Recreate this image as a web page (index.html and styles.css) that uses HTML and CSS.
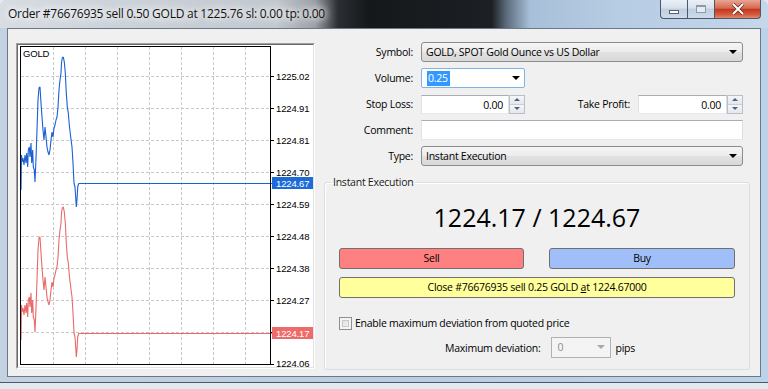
FILE: index.html
```html
<html>
<head>
    <link rel="stylesheet" href="styles.css">
</head>
<body>
<div class="window">
    <div class="titlebar">
        <span class="title">Order #76676935 sell 0.50 GOLD at 1225.76 sl: 0.00 tp: 0.00</span>
        <div class="caption">
            <span class="cap-btn cap-min"><i></i></span>
            <span class="cap-btn cap-max"><i></i></span>
            <span class="cap-btn cap-close">
                <svg width="14" height="12" viewBox="0 0 14 12"><path d="M2 1 L12 11 M12 1 L2 11" stroke="#5a2a20" stroke-width="3.4"/><path d="M2 1 L12 11 M12 1 L2 11" stroke="#fff" stroke-width="2"/></svg>
            </span>
        </div>
    </div>

    <div class="client">
        <!-- tick chart -->
        <div class="chart-panel">
            <div class="chart-inner">
                <svg width="295" height="322" viewBox="18 45 295 322">
                    <defs>
                        <polyline id="ticks" fill="none" stroke-width="1.1" stroke-linejoin="bevel"
                            points="21,190 21.5,155 22,162 23,158 24,165 25,155 26,163 26.7,153 27.7,167 28.3,150 29.3,147 30,157 31,143 31.7,163 32.7,150 33.3,167 34.3,170 35,182 36,158 37,130 38,100 39,88 40,87 41,103 42,117 43,130 44,140 45,127 46,137 47,147 48,152 49,155 50,150 51,140 52,132 53,137 54,128 55,125 56,120 57,117 58,107 59,90 60,80 61,73 61.5,63 62.3,58 63.3,57 64.3,62 65.3,73 66.3,93 67.3,107 68.3,113 69.3,125 70.7,137 72,147 73,163 74,183 75,187 75.7,197 76.3,207 77,200 77.7,187 78.7,183.5"/>
                    </defs>
                    <rect x="18" y="45" width="295" height="322" fill="#fff"/>
                    <g stroke="#c8c8c8" stroke-width="1" stroke-dasharray="3,2" fill="none">
                        <path d="M53.5 47V364 M85.5 47V364 M117.5 47V364 M149.5 47V364 M181.5 47V364 M213.5 47V364 M245.5 47V364"/>
                        <path d="M21 76.5H270 M21 108.5H270 M21 140.5H270 M21 172.5H270 M21 204.5H270 M21 236.5H270 M21 268.5H270 M21 300.5H270 M21 332.5H270"/>
                    </g>
                    <g stroke="#000" stroke-width="1">
                        <path d="M270 76.5h4 M270 108.5h4 M270 140.5h4 M270 172.5h4 M270 204.5h4 M270 236.5h4 M270 268.5h4 M270 300.5h4 M270 332.5h4 M270 364.5h4"/>
                    </g>
                    <!-- ask -->
                    <use href="#ticks" stroke="#1b5fd3"/>
                    <path d="M78.5 183.5H272" stroke="#1b5fd3" stroke-width="1"/>
                    <!-- bid -->
                    <use href="#ticks" stroke="#e96a6a" transform="translate(0,150)"/>
                    <path d="M78.5 333.5H272" stroke="#e96a6a" stroke-width="1"/>
                    <rect x="20.5" y="46.5" width="250" height="318" fill="none" stroke="#000" stroke-width="1"/>
                    <g class="scale">
                        <text x="276" y="80">1225.02</text>
                        <text x="276" y="112">1224.91</text>
                        <text x="276" y="144">1224.81</text>
                        <text x="276" y="176">1224.70</text>
                        <text x="276" y="208">1224.59</text>
                        <text x="276" y="240">1224.48</text>
                        <text x="276" y="272">1224.38</text>
                        <text x="276" y="304">1224.27</text>
                        <text x="276" y="366.5">1224.06</text>
                    </g>
                    <rect x="272" y="177" width="41" height="12" fill="#1c6bd6"/>
                    <text class="scale tag" x="276" y="187">1224.67</text>
                    <rect x="272" y="327" width="41" height="12" fill="#ee6b6b"/>
                    <text class="scale tag" x="276" y="337">1224.17</text>
                    <text class="scale" x="23" y="57">GOLD</text>
                </svg>
            </div>
        </div>

        <div class="side">
            <div class="form">
                <label>Symbol:</label>
                <div class="combo">GOLD, SPOT Gold Ounce vs US Dollar<span class="arrow"></span></div>

                <label>Volume:</label>
                <div class="row">
                    <div class="edit-combo"><span class="selected">0.25</span><span class="arrow"></span></div>
                </div>

                <label>Stop Loss:</label>
                <div class="row between">
                    <div class="spin-field">
                        <div class="edit num">0.00</div>
                        <div class="spinner"><span class="up"></span><span class="down"></span></div>
                    </div>
                    <div class="row">
                        <label class="tp-label">Take Profit:</label>
                        <div class="spin-field tp">
                            <div class="edit num">0.00</div>
                            <div class="spinner"><span class="up"></span><span class="down"></span></div>
                        </div>
                    </div>
                </div>

                <label>Comment:</label>
                <div class="edit"></div>

                <label>Type:</label>
                <div class="combo">Instant Execution<span class="arrow"></span></div>
            </div>

            <fieldset class="group">
                <legend>Instant Execution</legend>
                <div class="quote">1224.17 / 1224.67</div>
                <div class="trade-btns">
                    <div class="btn sell">Sell</div>
                    <div class="btn buy">Buy</div>
                </div>
                <div class="btn close">Close #76676935 sell 0.25 GOLD <u>a</u>t 1224.67000</div>
                <div class="check-row"><span class="check"></span>Enable maximum deviation from quoted price</div>
                <div class="dev-row">
                    <span>Maximum deviation:</span>
                    <div class="combo-off">0<span class="arrow"></span></div>
                    <span>pips</span>
                </div>
            </fieldset>
        </div>
    </div>
</div>
</body>
</html>
```

FILE: styles.css
```css
* {
    box-sizing: border-box;
}

body {
    margin: 0;
    background: #e3e9ef;
    font-family: "Open Sans", "Noto Sans", sans-serif;
    font-size: 10.5px;
    letter-spacing: -0.25px;
    color: #000;
}

/* aero window frame */
.window {
    width: 768px;
    height: 383px;
    padding: 0 7px 5px 7px;
    border-radius: 7px 7px 0 0;
    border-bottom: 1px solid #4b5866;
    background: linear-gradient(90deg, #c3d2e1, #b9cde2 50%, #bcd2e8);
    display: flex;
    flex-direction: column;
}

.titlebar {
    height: 28px;
    margin: 0 -7px;
    padding: 0 7px 0 8px;
    display: flex;
    align-items: flex-start;
    border-radius: 7px 7px 0 0;
    background: linear-gradient(90deg, #d8dde3 0, #cdd3da 14%, #c2c8cf 36%, #9a9fa5 41%, #2b2e32 44%, #15181b 48%, #1c1f23 64%, #5d6d7e 66%, #a7bfd8 69%, #b6cce3 80%, #c4d7eb 100%);
}

.title {
    padding-top: 5px;
    font-size: 12px;
    letter-spacing: -0.25px;
    color: #111;
    text-shadow: 0 0 6px #fff, 0 0 10px #fff, 0 0 14px #fff;
}

.caption {
    margin-left: auto;
    display: flex;
    height: 19px;
}

.cap-btn {
    height: 19px;
    border: 1px solid #4c5866;
    border-top: none;
    display: flex;
    align-items: center;
    justify-content: center;
    background: linear-gradient(#eaf0f6, #d7e1ec 45%, #bfcfe0 50%, #cddbe9);
}

.cap-min {
    width: 27px;
    border-right: none;
    border-radius: 0 0 0 4px;
}

.cap-min i {
    width: 10px;
    height: 4px;
    margin-top: 5px;
    background: #fff;
    border: 1px solid #53606e;
}

.cap-max {
    width: 28px;
}

.cap-max i {
    width: 10px;
    height: 8px;
    border: 1px solid #8e9aa7;
    border-top-width: 2px;
    background: #e4ebf2;
}

.cap-close {
    width: 46px;
    border-left: none;
    border-radius: 0 0 4px 0;
    background: linear-gradient(#e8a595, #d66a53 45%, #c4381e 52%, #d25a3d 80%, #e2896c);
}

.client {
    height: 349px;
    border: 1px solid #6b7885;
    background: #f0f0f0;
    display: flex;
    align-items: flex-start;
    padding: 13px 10px 0 8px;
    gap: 9px;
}

/* chart */
.chart-panel {
    margin-top: 1px;
    border: 1px solid;
    border-color: #a0a0a0 #fff #fff #a0a0a0;
}

.chart-inner {
    border: 1px solid;
    border-color: #696969 #e3e3e3 #e3e3e3 #696969;
}

.chart-inner svg {
    display: block;
}

.scale text, text.scale {
    font-family: "Liberation Sans", Arial, sans-serif;
    font-size: 9.5px;
    letter-spacing: -0.15px;
    fill: #000;
}

text.tag {
    fill: #fff;
}

/* order form */
.side {
    width: 426px;
}

.form {
    display: grid;
    grid-template-columns: 89px 322px;
    grid-auto-rows: 20px;
    column-gap: 8px;
    row-gap: 6px;
    align-items: center;
}

.form label {
    text-align: right;
}

.row {
    display: flex;
    align-items: center;
}

.between {
    justify-content: space-between;
}

.combo {
    position: relative;
    height: 20px;
    padding: 1px 0 0 4px;
    border: 1px solid #8c8c8c;
    border-radius: 3px;
    background: linear-gradient(#f5f5f5, #ececec 50%, #e1e1e1 51%, #d9d9d9);
    line-height: 17px;
}

.arrow {
    position: absolute;
    right: 5px;
    top: 7px;
    border-left: 4px solid transparent;
    border-right: 4px solid transparent;
    border-top: 4px solid #000;
}

.edit-combo {
    position: relative;
    width: 104px;
    height: 20px;
    padding: 2px 0 0 5px;
    background: #fff;
    border: 1px solid #7eb4ea;
    border-radius: 2px;
}

.edit-combo .arrow {
    right: 4px;
}

.selected {
    display: inline-block;
    padding: 0 2px 0 1px;
    background: #3399ff;
    color: #fff;
    line-height: 15px;
}

.edit {
    height: 20px;
    background: #fff;
    border: 1px solid;
    border-color: #abadb3 #dbdfe6 #e3e9ef #e2e3ea;
}

.num {
    text-align: right;
    padding: 1px 5px 0 0;
    line-height: 16px;
}

.spin-field {
    display: flex;
    width: 104px;
    height: 19px;
}

.spin-field .edit {
    flex: 1;
    height: 19px;
}

.spin-field.tp {
    width: 105px;
    margin-left: 8px;
}

.spinner {
    width: 16px;
    display: flex;
    flex-direction: column;
    border: 1px solid #b9bfc7;
}

.spinner span {
    flex: 1;
    display: flex;
    align-items: center;
    justify-content: center;
    background: linear-gradient(#f4f6f8, #e4e8ec);
}

.spinner span + span {
    border-top: 1px solid #c9ced4;
}

.spinner .up::after {
    content: "";
    border-left: 3px solid transparent;
    border-right: 3px solid transparent;
    border-bottom: 3px solid #4d6185;
}

.spinner .down::after {
    content: "";
    border-left: 3px solid transparent;
    border-right: 3px solid transparent;
    border-top: 3px solid #4d6185;
}

/* execution group box */
.group {
    margin: 9px 0 0 0;
    padding: 0 14px 10px 14px;
    height: 195px;
    border: 1px solid #d5dfe5;
    border-radius: 3px;
    box-shadow: inset 1px 1px 0 #fff;
}

.group legend {
    padding: 0 2px;
    margin-left: -8px;
    color: #1a1a1a;
}

.quote {
    margin-top: 13px;
    text-align: center;
    font-size: 25px;
    line-height: 30px;
    letter-spacing: 0;
}

.trade-btns {
    display: grid;
    grid-template-columns: 185px 186px;
    justify-content: space-between;
    margin-top: 16px;
}

.btn {
    height: 21px;
    border: 1px solid #707070;
    border-radius: 3px;
    text-align: center;
    line-height: 19px;
}

.sell {
    background: #ff8080;
}

.buy {
    background: #a0bff9;
}

.close {
    margin-top: 8px;
    background: #ffff9c;
}

.check-row {
    margin-top: 18px;
    display: flex;
    align-items: center;
    gap: 3px;
}

.check {
    width: 13px;
    height: 13px;
    border: 1px solid #8e8f8f;
    background: linear-gradient(135deg, #dcdcdc, #f6f6f6);
    box-shadow: inset 0 0 0 2px #f4f4f4, inset 0 0 0 3px #c8c8c8;
}

.dev-row {
    margin-top: 7px;
    display: flex;
    align-items: center;
    justify-content: center;
    padding-left: 6px;
}

.combo-off {
    position: relative;
    width: 60px;
    height: 21px;
    margin: 0 4px 0 11px;
    padding: 2px 0 0 5px;
    border: 1px solid #adb2b5;
    background: #f4f4f4;
    color: #8d8d8d;
}

.combo-off .arrow {
    border-top-color: #a8a8a8;
}
```
